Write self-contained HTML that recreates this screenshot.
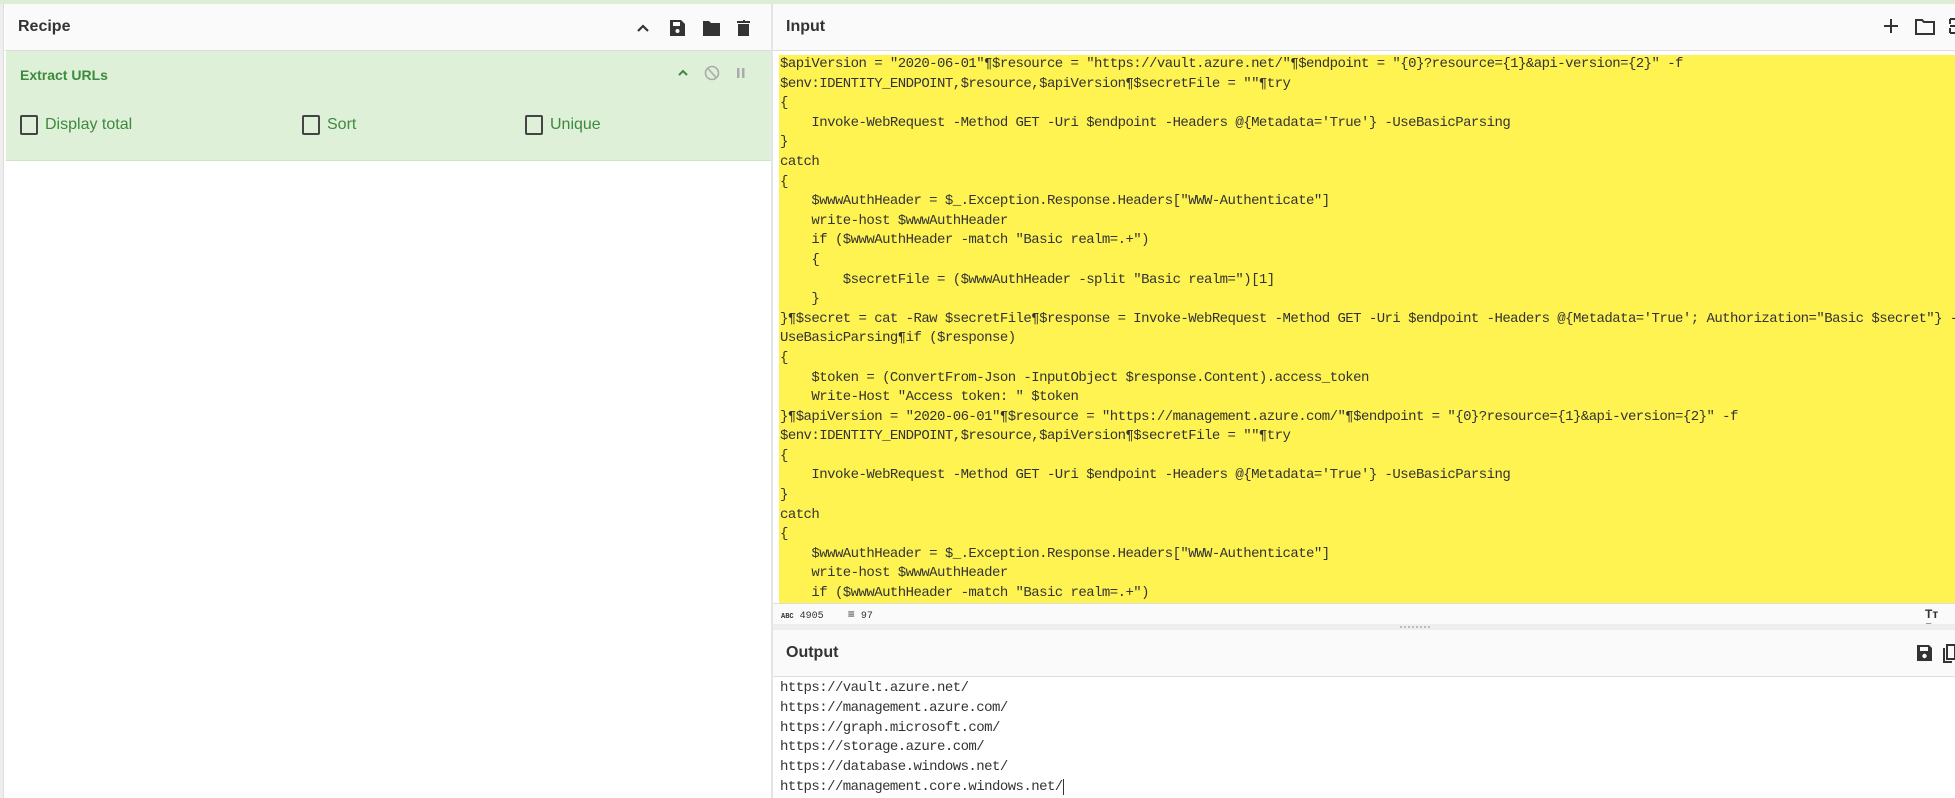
<!DOCTYPE html>
<html><head><meta charset="utf-8"><style>
*{margin:0;padding:0;box-sizing:border-box}
body{width:1955px;height:798px;overflow:hidden;background:#fff;font-family:"Liberation Sans",sans-serif;position:relative}
.abs{position:absolute}
.hdr{background:#fafafa;border-bottom:1px solid #ddd}
.title{font-weight:bold;font-size:16px;color:#333}
.mono{font-family:"Liberation Mono",monospace;font-size:14px;letter-spacing:-0.55px;color:#333;white-space:pre}
.cb{position:absolute;width:18px;height:20px;border:2px solid #444;border-radius:2px}
.lbl{position:absolute;font-size:16px;color:#3c8a3e}
</style></head><body>
<div class="abs" style="left:0;top:0;width:1955px;height:4px;background:#dcefd6"></div>
<div class="abs" style="left:0;top:4px;width:4px;height:794px;background:#eee;border-right:1px solid #ddd"></div>
<div class="abs hdr" style="left:5px;top:4px;width:766px;height:47px"></div>
<div class="abs title" style="left:18px;top:18px">Recipe</div>
<svg class="abs" style="left:636px;top:18px" width="120" height="20" viewBox="0 0 120 20">
<path d="M2 13 L7 8 L12 13" stroke="#333" stroke-width="2.2" fill="none"/>
<path d="M34 2 h11 l4 4 v12 h-15z" fill="#333"/><rect x="37" y="4" width="7" height="4" fill="#fafafa"/><circle cx="41.5" cy="13" r="2" fill="#fafafa"/>
<path d="M67 3 h6 l2 2 h9 v13 h-17z" fill="#333"/>
<path d="M101 3 h6 v-1 h2 v1 h5 v2 h-13z M102 6 h11 v12 h-11z" fill="#333"/>
</svg>
<div class="abs" style="left:6px;top:51px;width:765px;height:110px;background:#dff0d8;border-bottom:1px solid #cfe3c6"></div>
<div class="abs" style="left:20px;top:67px;font-weight:bold;font-size:14px;color:#3c8a3e">Extract URLs</div>
<svg class="abs" style="left:676px;top:64px" width="80" height="18" viewBox="0 0 80 18">
<path d="M3 11 L7 7 L11 11" stroke="#3c8a3e" stroke-width="2" fill="none"/>
<circle cx="36" cy="9" r="6.5" stroke="#aaa" stroke-width="1.6" fill="none"/><path d="M32 4.5 L40 13.5" stroke="#aaa" stroke-width="1.6"/>
<rect x="61" y="4" width="2.5" height="10" fill="#aaa"/><rect x="66" y="4" width="2.5" height="10" fill="#aaa"/>
</svg>
<div class="cb" style="left:20px;top:115px"></div><div class="lbl" style="left:45px;top:116px">Display total</div>
<div class="cb" style="left:302px;top:115px"></div><div class="lbl" style="left:327px;top:116px">Sort</div>
<div class="cb" style="left:525px;top:115px"></div><div class="lbl" style="left:550px;top:116px">Unique</div>
<div class="abs" style="left:771px;top:4px;width:2px;height:794px;background:#e4e4e4"></div>
<div class="abs hdr" style="left:773px;top:4px;width:1182px;height:47px"></div>
<div class="abs title" style="left:786px;top:18px">Input</div>
<svg class="abs" style="left:1882px;top:16px" width="73" height="22" viewBox="0 0 73 22">
<path d="M9 3 v14 M2 10 h14" stroke="#333" stroke-width="2"/>
<path d="M34 4 h6 l2 2 h10 v12 h-18z" stroke="#333" stroke-width="2" fill="none"/>
<path d="M68 3 h5 M68 3 v5 M68 17 h5 M68 17 v-5 M68 10 h5" stroke="#333" stroke-width="2" fill="none"/>
</svg>
<div class="abs" style="left:779px;top:55px;width:1176px;height:548px;background:#fff352;overflow:hidden">
<div class="mono" style="position:absolute;left:1px;top:0px;line-height:19.6px">$apiVersion = "2020-06-01"¶$resource = "https://vault.azure.net/"¶$endpoint = "{0}?resource={1}&amp;api-version={2}" -f
$env:IDENTITY_ENDPOINT,$resource,$apiVersion¶$secretFile = ""¶try
{
    Invoke-WebRequest -Method GET -Uri $endpoint -Headers @{Metadata='True'} -UseBasicParsing
}
catch
{
    $wwwAuthHeader = $_.Exception.Response.Headers["WWW-Authenticate"]
    write-host $wwwAuthHeader
    if ($wwwAuthHeader -match "Basic realm=.+")
    {
        $secretFile = ($wwwAuthHeader -split "Basic realm=")[1]
    }
}¶$secret = cat -Raw $secretFile¶$response = Invoke-WebRequest -Method GET -Uri $endpoint -Headers @{Metadata='True'; Authorization="Basic $secret"} -
UseBasicParsing¶if ($response)
{
    $token = (ConvertFrom-Json -InputObject $response.Content).access_token
    Write-Host "Access token: " $token
}¶$apiVersion = "2020-06-01"¶$resource = "https://management.azure.com/"¶$endpoint = "{0}?resource={1}&amp;api-version={2}" -f
$env:IDENTITY_ENDPOINT,$resource,$apiVersion¶$secretFile = ""¶try
{
    Invoke-WebRequest -Method GET -Uri $endpoint -Headers @{Metadata='True'} -UseBasicParsing
}
catch
{
    $wwwAuthHeader = $_.Exception.Response.Headers["WWW-Authenticate"]
    write-host $wwwAuthHeader
    if ($wwwAuthHeader -match "Basic realm=.+")</div></div>
<div class="abs" style="left:773px;top:603px;width:1182px;height:21px;background:#fafafa;border-top:1px solid #ddd"></div>
<div class="abs" style="left:781px;top:608px;font-size:10px;color:#333;font-family:'Liberation Mono',monospace"><b style="font-size:7px">ABC</b> 4905 &nbsp;&nbsp;&nbsp;<span style="font-size:12px">≡</span> 97</div>
<div class="abs" style="left:1925px;top:607px;font-size:12px;color:#333"><b>Tт</b> Ra</div>
<div class="abs" style="left:773px;top:624px;width:1182px;height:6px;background:#eee"></div>
<div class="abs" style="left:1400px;top:626px;width:30px;border-top:2px dotted #bbb"></div>
<div class="abs hdr" style="left:773px;top:630px;width:1182px;height:47px"></div>
<div class="abs title" style="left:786px;top:644px">Output</div>
<svg class="abs" style="left:1915px;top:643px" width="40" height="20" viewBox="0 0 40 20">
<path d="M2 2 h12 l3 3 v13 h-15z" fill="#333"/><rect x="5" y="4" width="8" height="4" fill="#fafafa"/><circle cx="9.5" cy="13" r="2.2" fill="#fafafa"/>
<path d="M32 2 h8 v14 h-8z" stroke="#333" stroke-width="2" fill="none"/><path d="M29 5 v14 h8" stroke="#333" stroke-width="2" fill="none"/>
</svg>
<div class="mono abs" style="left:780px;top:679px;line-height:19.8px">https://vault.azure.net/
https://management.azure.com/
https://graph.microsoft.com/
https://storage.azure.com/
https://database.windows.net/
https://management.core.windows.net/<span style="border-left:1px solid #333"></span></div>
</body></html>
